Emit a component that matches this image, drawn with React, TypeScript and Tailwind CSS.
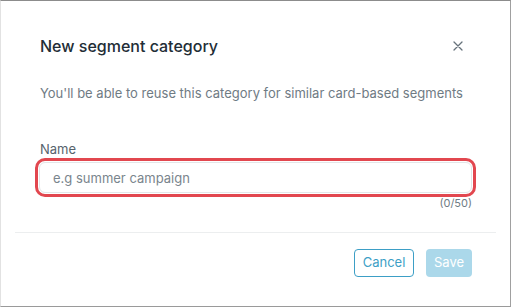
export default function App() {
  return (
    <div
      className="w-[512px] h-[308px] bg-white"
      style={{ fontFamily: 'Inter, "Noto Sans", sans-serif' }}
    >
      <div className="w-[511px] h-[307px] bg-white border-t border-t-[#8c8c8c] border-l border-l-[#e2e2e2] border-r border-r-[#a0a0a0] border-b border-b-[#9a9a9a] flex flex-col">
        {/* Header */}
        <div className="px-[38px] pt-[34px] flex items-center justify-between">
          <h2 className="text-[16px] leading-[22px] font-medium text-[#222d36] pl-px">
            New segment category
          </h2>
          <button className="w-[16px] h-[16px] flex items-center justify-center mr-[6px] text-[#66727b]">
            <svg width="10" height="10" viewBox="0 0 10 10" fill="none">
              <path d="M1 1L9 9M9 1L1 9" stroke="currentColor" strokeWidth="1.3" strokeLinecap="round" />
            </svg>
          </button>
        </div>

        {/* Body */}
        <div className="px-[38px]">
          <p className="mt-[26px] text-[13px] leading-[20px] text-[#6f7b84] pl-px">
            You'll be able to reuse this category for similar card-based segments
          </p>

          <label className="block mt-[37px] text-[13px] leading-[18px] text-[#56636d] pl-px">
            Name
          </label>
          <div className="-mx-[4px] border-[3px] border-[#e2474f] rounded-[10px] p-px">
            <input
              className="w-full h-[31px] border border-[#e3e6e8] rounded-[6px] px-[13px] text-[13px] text-[#333] placeholder:text-[#7a858d] outline-none"
              placeholder="e.g summer campaign"
            />
          </div>
          <div className="text-right text-[11px] leading-[14px] text-[#6f7b84] mt-[-1px]">
            (0/50)
          </div>
        </div>

        {/* Divider */}
        <div className="mx-[14px] mt-[22px] border-t border-[#eceeef]" />

        {/* Footer */}
        <div className="flex justify-end gap-[12px] pr-[38px] pt-[16px]">
          <button className="h-[28px] w-[60px] rounded-[4px] border border-[#3d9fc6] text-[#3d9fc6] text-[13px] bg-white">
            Cancel
          </button>
          <button className="h-[28px] w-[46px] rounded-[4px] bg-[#abd8ea] text-white text-[13px]">
            Save
          </button>
        </div>
      </div>
    </div>
  );
}
